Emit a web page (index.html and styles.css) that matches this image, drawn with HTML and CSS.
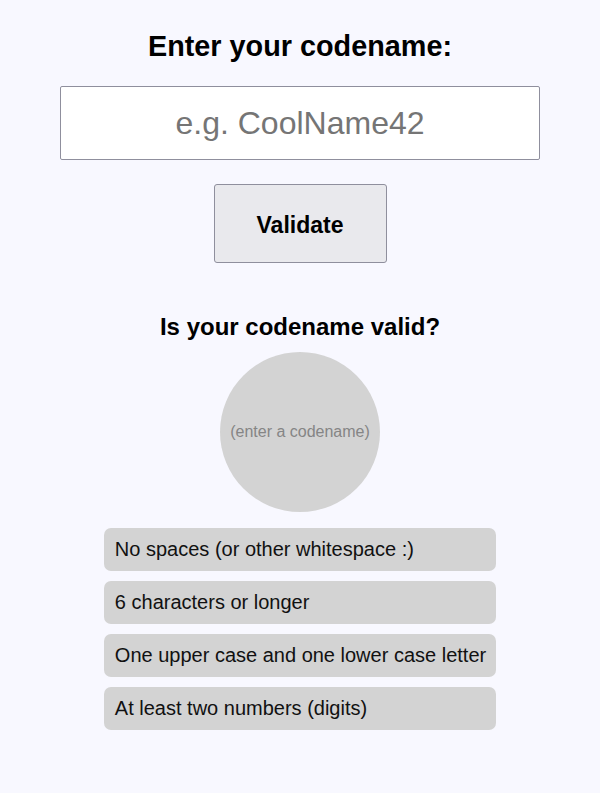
FILE: index.html
```html
<!DOCTYPE html>
<html lang="en">
<head>
<meta charset="utf-8">
<title>Codename validator</title>
<link rel="stylesheet" href="styles.css">
</head>
<body>
<main class="app">
  <h1 class="title">Enter your codename:</h1>
  <input class="codename" type="text" placeholder="e.g. CoolName42">
  <button class="validate" type="button">Validate</button>
  <h2 class="subtitle">Is your codename valid?</h2>
  <div class="status"><span>(enter a codename)</span></div>
  <ul class="rules">
    <li class="rule">No spaces (or other whitespace :)</li>
    <li class="rule">6 characters or longer</li>
    <li class="rule">One upper case and one lower case letter</li>
    <li class="rule">At least two numbers (digits)</li>
  </ul>
</main>
</body>
</html>
```

FILE: styles.css
```css
html, body {
  margin: 0;
  padding: 0;
}
body {
  background: #f8f8ff;
  font-family: "Liberation Sans", Arial, sans-serif;
  color: #000;
}
.app {
  display: flex;
  flex-direction: column;
  align-items: center;
  padding-top: 30px;
}
.title {
  margin: 0;
  font-size: 28.8px;
  line-height: 33px;
  font-weight: bold;
}
.codename {
  box-sizing: border-box;
  margin-top: 23px;
  width: 480px;
  height: 74px;
  border: 1px solid #8f8f9d;
  border-radius: 2px;
  background: #fff;
  font-family: "Liberation Sans", Arial, sans-serif;
  font-size: 32px;
  text-align: center;
  color: #000;
  padding: 0 10px;
}
.codename::placeholder {
  color: #757575;
}
.validate {
  box-sizing: border-box;
  margin-top: 24px;
  width: 173px;
  height: 79px;
  border: 1px solid #8f8f9d;
  border-radius: 3px;
  background: #e9e9ed;
  font-family: "Liberation Sans", Arial, sans-serif;
  font-size: 23px;
  font-weight: bold;
  color: #000;
  padding: 4px 0 0;
}
.subtitle {
  margin: 50px 0 0;
  font-size: 24px;
  line-height: 27px;
  font-weight: bold;
}
.status {
  margin-top: 12px;
  width: 160px;
  height: 160px;
  border-radius: 50%;
  background: #d3d3d3;
  display: flex;
  align-items: center;
  justify-content: center;
  font-size: 16px;
  color: #858585;
}
.rules {
  list-style: none;
  margin: 16px 0 0;
  padding: 0;
  display: flex;
  flex-direction: column;
  gap: 10px;
}
.rule {
  background: #d3d3d3;
  border-radius: 7px;
  font-size: 20px;
  line-height: 23px;
  padding: 10px 10px 10px 11px;
  color: #111;
}
```
